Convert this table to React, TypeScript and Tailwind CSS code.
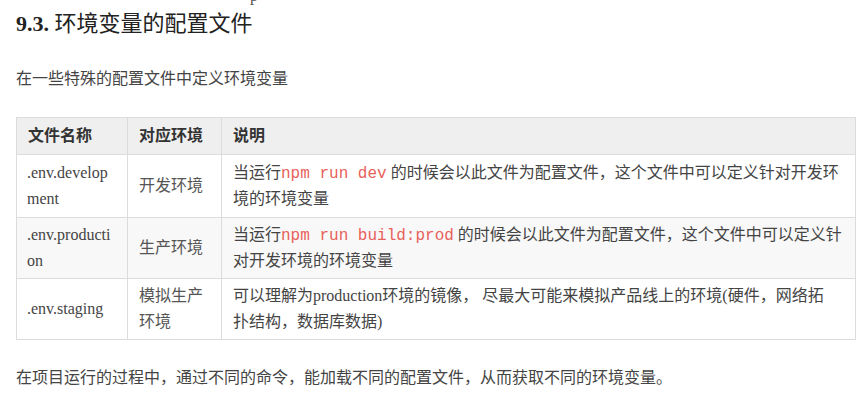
import React from 'react'

const serif = { fontFamily: '"Liberation Serif", "Noto Sans CJK SC", serif' }

function Code({ children }: { children: React.ReactNode }) {
  return (
    <code className="font-['Liberation_Mono',monospace] text-[16px] leading-[26px] text-[#e8615a]">{children}</code>
  )
}

const rows = [
  {
    file: ['.env.develop', 'ment'],
    env: ['开发环境'],
    desc: [
      <>当运行<Code>npm run dev</Code> 的时候会以此文件为配置文件，这个文件中可以定义针对开发环</>,
      <>境的环境变量</>,
    ],
    bg: 'bg-white',
    pad: 'py-[5px]',
  },
  {
    file: ['.env.producti', 'on'],
    env: ['生产环境'],
    desc: [
      <>当运行<Code>npm run build:prod</Code> 的时候会以此文件为配置文件，这个文件中可以定义针</>,
      <>对开发环境的环境变量</>,
    ],
    bg: 'bg-[#f8f8f8]',
    pad: 'py-[4px]',
  },
  {
    file: ['.env.staging'],
    env: ['模拟生产', '环境'],
    desc: [
      <>可以理解为production环境的镜像， 尽最大可能来模拟产品线上的环境(硬件，网络拓</>,
      <>扑结构，数据库数据)</>,
    ],
    bg: 'bg-white',
    pad: 'py-[4px]',
  },
]

export default function App() {
  return (
    <div className="w-[864px] h-[398px] overflow-hidden bg-white text-[#333]" style={serif}>
      {/* cut-off line from the previous block */}
      <div className="h-[6px] overflow-hidden pl-[250px]">
        <div className="-mt-[14px] text-[16px] leading-[20px] text-[#555]">p</div>
      </div>

      <h2 className="pl-4 pt-[4px] text-[22px] leading-[28px] font-bold text-[#222]">
        9.3. <span className="font-normal">环境变量的配置文件</span>
      </h2>

      <p className="pl-4 mt-[28px] text-[16px] leading-[26px] text-[#444]">在一些特殊的配置文件中定义环境变量</p>

      <table className="ml-4 mt-[25px] w-[840px] border-collapse text-[16px] leading-[26px] text-[#444]">
        <thead>
          <tr className="bg-[#efefef] text-[#333]">
            <th className="w-[111px] border border-[#dcdcdc] px-[11px] py-[5px] text-left font-bold">
              <div className="h-[26px]">文件名称</div>
            </th>
            <th className="w-[94px] border border-[#dcdcdc] px-[11px] py-[5px] text-left font-bold">
              <div className="h-[26px]">对应环境</div>
            </th>
            <th className="border border-[#dcdcdc] px-[11px] py-[5px] text-left font-bold">
              <div className="h-[26px]">说明</div>
            </th>
          </tr>
        </thead>
        <tbody>
          {rows.map((r, i) => (
            <tr key={i} className={r.bg}>
              <td className={`border border-[#dcdcdc] px-[10px] ${r.pad} align-middle whitespace-nowrap`}>
                {r.file.map((l, j) => <div key={j} className="h-[26px]">{l}</div>)}
              </td>
              <td className={`border border-[#dcdcdc] px-[11px] ${r.pad} align-middle whitespace-nowrap text-[#555]`}>
                {r.env.map((l, j) => <div key={j} className="h-[26px]">{l}</div>)}
              </td>
              <td className={`border border-[#dcdcdc] px-[11px] ${r.pad} align-middle whitespace-nowrap`}>
                {r.desc.map((l, j) => <div key={j} className="h-[26px]">{l}</div>)}
              </td>
            </tr>
          ))}
        </tbody>
      </table>

      <p className="pl-4 mt-[25px] text-[16px] leading-[26px] text-[#444]">
        在项目运行的过程中，通过不同的命令，能加载不同的配置文件，从而获取不同的环境变量。
      </p>
    </div>
  )
}
